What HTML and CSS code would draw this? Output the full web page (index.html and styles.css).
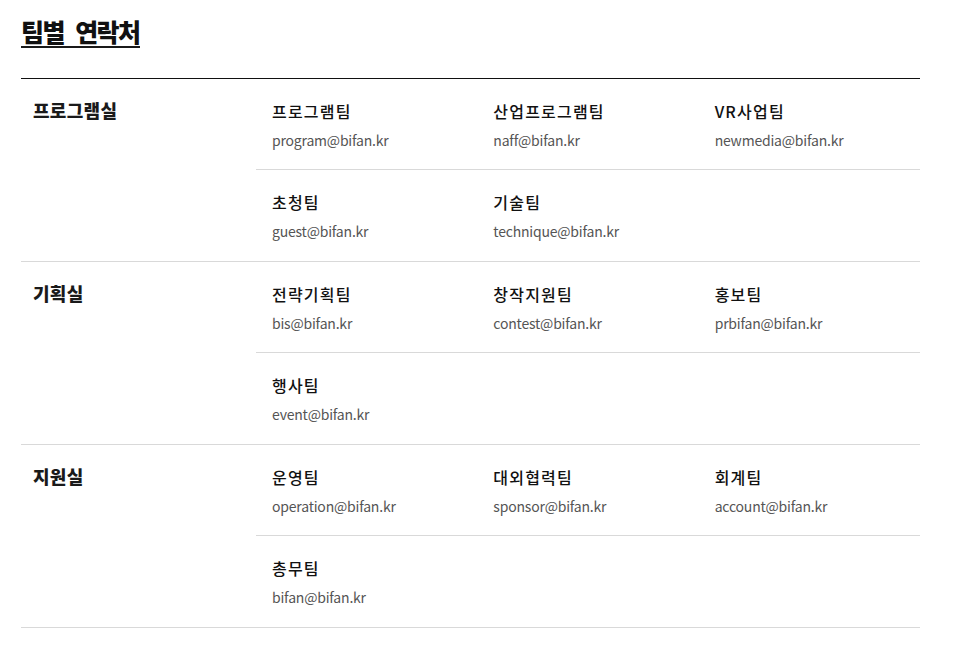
FILE: index.html
```html
<!DOCTYPE html>
<html lang="ko">
<head>
<meta charset="utf-8">
<link rel="stylesheet" href="styles.css">
</head>
<body>
<div class="page">
  <h2 class="title"><span>팀별 연락처</span></h2>
  <div class="table">
    <section class="dept">
      <h3 class="dept-name">프로그램실</h3>
      <div class="teams">
        <div class="team"><p class="name">프로그램팀</p><p class="mail">program@bifan.kr</p></div>
        <div class="team"><p class="name">산업프로그램팀</p><p class="mail">naff@bifan.kr</p></div>
        <div class="team"><p class="name">VR사업팀</p><p class="mail">newmedia@bifan.kr</p></div>
        <div class="team"><p class="name">초청팀</p><p class="mail">guest@bifan.kr</p></div>
        <div class="team"><p class="name">기술팀</p><p class="mail">technique@bifan.kr</p></div>
        <div class="team"></div>
      </div>
    </section>
    <section class="dept">
      <h3 class="dept-name">기획실</h3>
      <div class="teams">
        <div class="team"><p class="name">전략기획팀</p><p class="mail">bis@bifan.kr</p></div>
        <div class="team"><p class="name">창작지원팀</p><p class="mail">contest@bifan.kr</p></div>
        <div class="team"><p class="name">홍보팀</p><p class="mail">prbifan@bifan.kr</p></div>
        <div class="team"><p class="name">행사팀</p><p class="mail">event@bifan.kr</p></div>
        <div class="team"></div>
        <div class="team"></div>
      </div>
    </section>
    <section class="dept">
      <h3 class="dept-name">지원실</h3>
      <div class="teams">
        <div class="team"><p class="name">운영팀</p><p class="mail">operation@bifan.kr</p></div>
        <div class="team"><p class="name">대외협력팀</p><p class="mail">sponsor@bifan.kr</p></div>
        <div class="team"><p class="name">회계팀</p><p class="mail">account@bifan.kr</p></div>
        <div class="team"><p class="name">총무팀</p><p class="mail">bifan@bifan.kr</p></div>
        <div class="team"></div>
        <div class="team"></div>
      </div>
    </section>
  </div>
</div>
</body>
</html>
```
FILE: styles.css
```css
* { box-sizing: border-box; }
html, body { margin: 0; padding: 0; background: #fff; }
body { font-family: "Noto Sans CJK KR", "Noto Sans", sans-serif; color: #111; }
.page { padding: 16px 33px 0 21px; }
.title { margin: 0; font-size: 25px; font-weight: 900; letter-spacing: -1.6px; word-spacing: 6px; line-height: 30px; }
.title span { display: inline-block; border-bottom: 2px solid #1a1a1a; padding-right: 1px; }
.table { margin-top: 30px; border-top: 1px solid #111; }
.dept { display: grid; grid-template-columns: 235px 1fr; border-bottom: 1px solid #d9d9d9; }
.dept-name { margin: 0; padding: 19px 12px 0; font-size: 18px; font-weight: 900; letter-spacing: 0.3px; line-height: 24px; color: #1a1a1a; }
.teams { display: grid; grid-template-columns: repeat(3, 1fr); }
.team { height: 91px; padding: 20px 16px 0; }
.team:nth-child(-n+3) { border-bottom: 1px solid #d9d9d9; }
.name { margin: 0; font-size: 16px; font-weight: 500; line-height: 24px; color: #111; letter-spacing: 1.2px; }
.mail { margin: 7px 0 0; font-size: 14px; line-height: 20px; color: #555; letter-spacing: -0.2px; }
```
